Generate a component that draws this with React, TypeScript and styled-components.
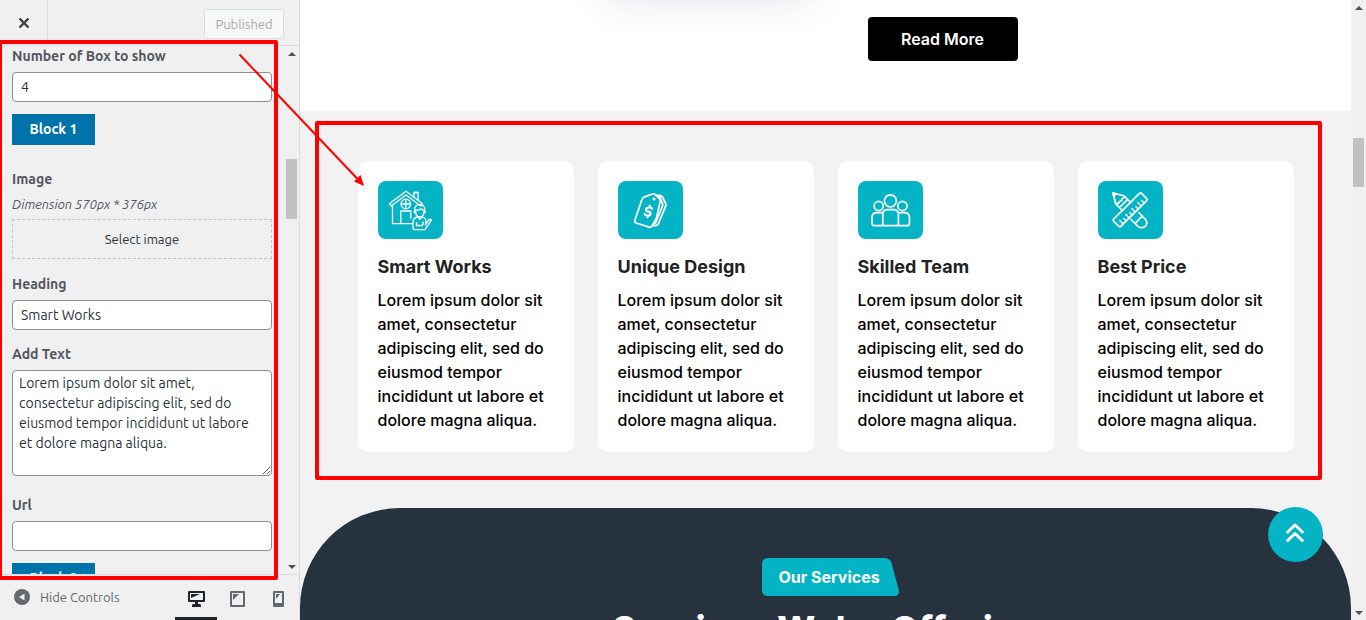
import React from "react";
import styled, { createGlobalStyle } from "styled-components";

const Global = createGlobalStyle`
  *, *::before, *::after { box-sizing: border-box; }
  body { margin: 0; overflow: hidden; background: #fff; }
  button, input, textarea { font: inherit; }
  h2, h3, p { margin: 0; }
`;

const TEAL = "#04b4c4";
const RED = "#ff0000";

const Page = styled.div`
  position: relative;
  display: flex;
  height: 100vh;
  overflow: hidden;
`;

const Sidebar = styled.aside`
  position: relative;
  flex: 0 0 300px;
  display: flex;
  flex-direction: column;
  background: #f0f0f0;
  border-right: 1px solid #dcdcde;
  font: 14px/20px Ubuntu, "Noto Sans", sans-serif;
  color: #50575e;
`;

const TopBar = styled.header`
  flex: 0 0 46px;
  display: flex;
  align-items: stretch;
  justify-content: space-between;
  border-bottom: 1px solid #dcdcde;
`;

const CloseButton = styled.button`
  width: 48px;
  padding: 0;
  border: 0;
  border-right: 1px solid #dcdcde;
  background: none;
  display: grid;
  place-items: center;
`;

const PublishButton = styled.button`
  align-self: center;
  width: 80px;
  height: 30px;
  margin: 2px 15px 0 0;
  padding: 0;
  border: 1px solid #dcdcde;
  border-radius: 3px;
  background: #f6f7f7;
  color: #a7aaad;
  font-size: 13px;
`;

const Scroller = styled.div`
  flex: 1;
  min-height: 0;
  display: flex;
`;

const Controls = styled.form`
  flex: 1;
  min-width: 0;
  overflow: hidden;
  padding: 0 12px;
`;

const Field = styled.div<{ $gap?: number }>`
  display: flex;
  flex-direction: column;
  align-items: stretch;
  margin-bottom: ${(p) => p.$gap ?? 12}px;
`;

const Label = styled.label<{ $tight?: boolean }>`
  margin-bottom: ${(p) => (p.$tight ? 5 : 6)}px;
  font-weight: 700;
  color: #50575e;
`;

const TextInput = styled.input`
  height: 30px;
  padding: 0 8px;
  border: 1px solid #8c8f94;
  border-radius: 4px;
  background: #fff;
  color: #2c3338;
`;

const TextArea = styled.textarea`
  display: block;
  height: 106px;
  padding: 2px 6px;
  border: 1px solid #8c8f94;
  border-radius: 4px;
  background: #fff;
  color: #2c3338;
  line-height: 20px;
  resize: vertical;
  overflow: hidden;
`;

const BlockButton = styled.button`
  display: block;
  width: 83px;
  height: 31px;
  margin-bottom: 24px;
  padding: 0 0 1px;
  border: 0;
  background: #0073aa;
  color: #fff;
  font-weight: 700;
`;

const Hint = styled.span`
  margin-bottom: 5px;
  font-size: 13px;
  font-style: italic;
`;

const SelectImage = styled.button`
  height: 40px;
  border: 1px dashed #c3c4c7;
  background: none;
  color: #2c3338;
  font-size: 13px;
`;

const Track = styled.div`
  flex: 0 0 15px;
  display: flex;
  flex-direction: column;
  align-items: center;
  padding: 6px 0 5px;
  background: #f0f0f0;
`;

const Spacer = styled.div<{ $grow: number }>`
  flex: ${(p) => p.$grow} 0 0;
`;

const Thumb = styled.div<{ $height: number }>`
  width: 11px;
  height: ${(p) => p.$height}px;
  background: #c1c1c1;
`;

const Footer = styled.footer`
  flex: 0 0 46px;
  display: flex;
  align-items: stretch;
  justify-content: space-between;
  border-top: 1px solid #dcdcde;
`;

const HideButton = styled.button`
  display: flex;
  align-items: center;
  gap: 10px;
  padding: 0 0 1px 14px;
  border: 0;
  background: none;
  color: #646970;
  font-size: 13px;
`;

const Devices = styled.div`
  display: flex;
`;

const DeviceButton = styled.button<{ $active?: boolean }>`
  width: ${(p) => (p.$active ? 42 : 41)}px;
  padding: 5px 0 0;
  border: 0;
  border-bottom: 3px solid ${(p) => (p.$active ? "#1d2327" : "transparent")};
  background: none;
  color: ${(p) => (p.$active ? "#1d2327" : "#646970")};
  display: grid;
  place-items: center;
`;

const Preview = styled.main`
  position: relative;
  flex: 1;
  min-width: 0;
  display: flex;
  flex-direction: column;
  overflow: hidden;
  background: #f2f2f2;
  font: 500 16px/24px Inter, sans-serif;
  color: #000;
`;

const Intro = styled.section`
  flex: 0 0 111px;
  display: grid;
  grid-template-columns: 1fr 1fr;
  align-items: start;
  overflow: hidden;
  background: #fff;
`;

const PhotoShadow = styled.div`
  justify-self: end;
  width: 210px;
  height: 60px;
  margin: -62px 12px 0 0;
  box-shadow: 0 0 40px rgba(38, 50, 72, 0.14);
  border-radius: 10px;
`;

const ReadMore = styled.a`
  justify-self: start;
  width: 150px;
  margin: 17px 0 0 42px;
  padding: 10px 0;
  border-radius: 4px;
  background: #000;
  color: #fff;
  font-weight: 600;
  text-align: center;
  text-decoration: none;
`;

const Features = styled.section`
  position: relative;
  display: grid;
  grid-template-columns: repeat(4, minmax(0, 216px));
  justify-content: center;
  gap: 24px;
  padding: 50px 40px 56px;
`;

const Card = styled.article`
  padding: 20px;
  border-radius: 10px;
  background: #fff;
`;

const IconTile = styled.div`
  width: 65px;
  height: 58px;
  border-radius: 8px;
  background: ${TEAL};

  svg { display: block; }
`;

const CardTitle = styled.h3`
  margin: 14px 0 8px;
  font-size: 18px;
  line-height: 27px;
  font-weight: 700;
  color: #222;
`;

const Services = styled.section`
  flex: 1 0 auto;
  display: flex;
  flex-direction: column;
  align-items: center;
  padding-top: 50px;
  border-radius: 100px 100px 0 0;
  background: #26323e;
  color: #fff;
`;

const Badge = styled.div`
  position: relative;
  width: 137px;
  height: 38px;
  margin-left: 9px;
  padding: 7px 17px;
  font-weight: 700;
  white-space: nowrap;

  svg { position: absolute; inset: 0; }
  span { position: relative; }
`;

const ServicesTitle = styled.h2`
  margin-top: 6px;
  font-size: 36px;
  line-height: 54px;
  font-weight: 800;
`;

const ToTop = styled.a`
  position: absolute;
  right: 28px;
  bottom: 58px;
  width: 55px;
  height: 55px;
  padding: 0 1px 4px 0;
  border-radius: 50%;
  background: ${TEAL};
  display: grid;
  place-items: center;
`;

const PanelOutline = styled.div`
  position: absolute;
  top: 40px;
  left: -2px;
  right: 21px;
  bottom: 40px;
  border: 4px solid ${RED};
  border-radius: 2px;
  pointer-events: none;
`;

const FeaturesOutline = styled.div`
  position: absolute;
  top: 10px;
  left: 15px;
  right: 29px;
  bottom: 28px;
  border: 4px solid ${RED};
  border-radius: 2px;
  pointer-events: none;
`;

const Arrow = styled.svg`
  position: absolute;
  top: 50px;
  left: 235px;
  pointer-events: none;
`;

const HouseIcon = () => (
  <svg width="65" height="58" viewBox="0 0 65 58" fill="none" stroke="#fff" strokeWidth="1.3" strokeLinejoin="round">
    <path d="M14.5 25V42.7H34.5M14.5 25.5 11.3 22.8 28 10.3 44.5 22.8 42.8 25 28 14 12.8 25.2M36 16V11.5H40V19.5" />
    <path d="M35.2 11.5h5.6" />
    <circle cx="27.8" cy="23" r="4.8" />
    <path d="M27.8 18.2v9.6M23 23h9.600M22.800 42.700V30h10v7.600" />
    <path d="M37 30c-1.200-4.500 1.500-6.300 4.700-6.300s6 1.800 4.800 6.300M37 29.300c3 0 4.700-.3 6.200-1.600.8 1 1.700 1.600 3.300 1.600M37.600 30c0 4 1.800 6 4.200 6s4.200-2 4.200-6M37 29.500c-1.500.7-1 2.700.8 2.700M46.500 29.500c1.500.7 1 2.700-.8 2.700" />
    <path d="M39.300 36l2.500 2.400L44.300 36M39.300 36c-3 .8-4.300 2-4.300 5v5.500c0 1.500 1 2.200 2 2.200h10l6.700-10-2.700-.4-4 6.200M44.300 36c2.200.7 3.500 2 3.500 4v2.500M38.500 41v3.500h6.500M45 40.500v3.500" />
  </svg>
);

const TagIcon = () => (
  <svg width="65" height="58" viewBox="0 0 65 58" fill="none" stroke="#fff" strokeWidth="1.8" strokeLinejoin="round" strokeLinecap="round">
    <path d="M26.500 15.800 34.500 13q1.500-.5 2.800.5l4.200 4.200q1 1 .7 2.700L38.500 37l-4.500 8q-1 1.600-3 1.200L18.200 42q-1.800-.6-1.400-2.500L24 18.200q.6-1.700 2.500-2.400Z" />
    <path d="M38 14.500h4q1.500 0 2.300 1.200l3.300 6.600q.6 1.200.2 2.400L40.500 42.500q-.8 2-2.800 2H34.500M41.500 15l3 7.500q.5 1.200 0 2.400L37.500 42" />
    <circle cx="36" cy="18" r="1.500" fill="#fff" stroke="none" />
    <path d="M34 27.500c-1.500-2-6-1-6 1.200 0 2.600 5 1.300 4.600 4-.4 2.200-4.800 2.500-6 .3M31.800 24.500 31.400 26M30 34.500 29.500 36.300" strokeWidth="2.200" />
  </svg>
);

const TeamIcon = () => (
  <svg width="65" height="58" viewBox="0 0 65 58" fill="none" stroke="#fff" strokeWidth="1.7" strokeLinejoin="round">
    <circle cx="32.400" cy="19.800" r="6" />
    <circle cx="20.700" cy="25" r="4.600" />
    <circle cx="44.400" cy="25" r="4.600" />
    <path d="M24.800 44.500V33.500q0-4.800 4.800-4.800h6q4.800 0 4.800 4.800V44.500" />
    <path d="M24.800 31.700H19q-5 0-5 5v5.500q0 2.500 2.500 2.500H49q2.500 0 2.500-2.500V36.700q0-5-5-5H40.400" />
  </svg>
);

const ToolsIcon = () => (
  <svg width="65" height="58" viewBox="0 0 65 58" fill="none" stroke="#fff" strokeWidth="1.700" strokeLinejoin="round" strokeLinecap="round">
    <path d="M41.500 12.400q1-1 2 0l5.200 5.200q1 1 0 2L23 45.200q-1.200 1.200-2.400 0l-5-5q-1-1 0-2Z" />
    <path d="M46.300 22l-2.300-2.300M43.200 25l-3.500-3.500M40.200 28l-2.300-2.300M37.200 31l-3.500-3.500M34.200 34l-2.300-2.300M31.200 37l-3.500-3.500M28.200 40l-2.300-2.300M25.200 43l-3.500-3.500" strokeWidth="1.500" />
    <path d="M24.500 29.500 17.800 23 15 12 26 14.800 32.800 21.500M17.800 23C20 23 21 22 21.300 20.500M21.300 20.500q3 0 2.700-3 2 0 2-2.700M21.500 26.500l8-8" />
    <path d="M15 12l3 .8-2.200 2.200Z" fill="#fff" />
    <path d="M33 38.500 40 45.300q2 1.800 4.500 1.300 4-.8 4.300-4.600 0-2-1.300-3.500L40.800 31.500M37 42.300l7.500-7.500" />
  </svg>
);

const cards = [
  { title: "Smart Works", Icon: HouseIcon },
  { title: "Unique Design", Icon: TagIcon },
  { title: "Skilled Team", Icon: TeamIcon },
  { title: "Best Price", Icon: ToolsIcon },
];

const UpArrow = () => (
  <svg width="8" height="4" viewBox="0 0 8 4"><path d="M4 0 8 4H0Z" fill="#505050" /></svg>
);
const DownArrow = () => (
  <svg width="8" height="4" viewBox="0 0 8 4"><path d="M0 0H8L4 4Z" fill="#505050" /></svg>
);

const ScrollTrack = ({ before, size, after }: { before: number; size: number; after: number }) => (
  <Track aria-hidden="true">
    <UpArrow />
    <Spacer $grow={before} />
    <Thumb $height={size} />
    <Spacer $grow={after} />
    <DownArrow />
  </Track>
);

export default function App() {
  return (
    <>
      <Global />
      <Page>
        <Sidebar>
          <TopBar>
            <CloseButton aria-label="Close">
              <svg width="12" height="12" viewBox="0 0 12 12" stroke="#3c434a" strokeWidth="2.400">
                <path d="M1.500 1.500l9 9M10.500 1.500l-9 9" />
              </svg>
            </CloseButton>
            <PublishButton>Published</PublishButton>
          </TopBar>
          <Scroller>
            <Controls>
              <Field>
                <Label htmlFor="count">Number of Box to show</Label>
                <TextInput id="count" defaultValue="4" />
              </Field>
              <BlockButton type="button">Block 1</BlockButton>
              <Field $gap={15}>
                <Label htmlFor="image" $tight>Image</Label>
                <Hint>Dimension 570px * 376px</Hint>
                <SelectImage id="image" type="button">Select image</SelectImage>
              </Field>
              <Field $gap={14}>
                <Label htmlFor="heading">Heading</Label>
                <TextInput id="heading" defaultValue="Smart Works" />
              </Field>
              <Field $gap={19}>
                <Label htmlFor="text">Add Text</Label>
                <TextArea
                  id="text"
                  defaultValue="Lorem ipsum dolor sit amet, consectetur adipiscing elit, sed do eiusmod tempor incididunt ut labore et dolore magna aliqua."
                />
              </Field>
              <Field>
                <Label htmlFor="url">Url</Label>
                <TextInput id="url" />
              </Field>
              <BlockButton type="button">Block 2</BlockButton>
            </Controls>
            <ScrollTrack before={103} size={60} after={344} />
          </Scroller>
          <Footer>
            <HideButton>
              <svg width="16" height="16" viewBox="0 0 16 16">
                <circle cx="8" cy="8" r="8" fill="#646970" />
                <path d="M10.500 4.500v7L5 8Z" fill="#f0f0f0" />
              </svg>
              Hide Controls
            </HideButton>
            <Devices>
              <DeviceButton $active aria-label="Desktop">
                <svg width="17" height="16" viewBox="0 0 17 16" fill="currentColor">
                  <path fillRule="evenodd" d="M1 0h15q1 0 1 1v9q0 1-1 1H10v2h2l1 1v2H4v-2l1-1h2v-2H1q-1 0-1-1V1Q0 0 1 0ZM2 2v7h13V2ZM3 3h9L3 7Z" />
                </svg>
              </DeviceButton>
              <DeviceButton aria-label="Tablet">
                <svg width="15" height="16" viewBox="0 0 15 16" fill="currentColor">
                  <path fillRule="evenodd" d="M1 0h13q1 0 1 1v14q0 1-1 1H1q-1 0-1-1V1Q0 0 1 0ZM2 2v12h11V2ZM3 3h6L3 9Z" />
                </svg>
              </DeviceButton>
              <DeviceButton aria-label="Mobile">
                <svg width="11" height="16" viewBox="0 0 11 16" fill="currentColor">
                  <path fillRule="evenodd" d="M1 0h9q1 0 1 1v14q0 1-1 1H1q-1 0-1-1V1Q0 0 1 0ZM2 2v10h7V2ZM3 3h4L3 8Z" />
                </svg>
              </DeviceButton>
            </Devices>
          </Footer>
          <PanelOutline />
        </Sidebar>

        <Preview>
          <Intro>
            <PhotoShadow />
            <ReadMore href="#">Read More</ReadMore>
          </Intro>
          <Features>
            {cards.map(({ title, Icon }) => (
              <Card key={title}>
                <IconTile><Icon /></IconTile>
                <CardTitle>{title}</CardTitle>
                <p>Lorem ipsum dolor sit amet, consectetur adipiscing elit, sed do eiusmod tempor incididunt ut labore et dolore magna aliqua.</p>
              </Card>
            ))}
            <FeaturesOutline />
          </Features>
          <Services>
            <Badge>
              <svg width="137" height="38" viewBox="0 0 137 38">
                <path d="M6 0H122q6 0 7.500 5L137 33q0 5-5 5H6q-6 0-6-6V6Q0 0 6 0Z" fill={TEAL} />
              </svg>
              <span>Our Services</span>
            </Badge>
            <ServicesTitle>Services We're Offering</ServicesTitle>
          </Services>
          <ToTop href="#" aria-label="Back to top">
            <svg width="18" height="20" viewBox="0 0 18 20" fill="none" stroke="#fff" strokeWidth="3" strokeLinecap="round" strokeLinejoin="round">
              <path d="M1.700 9 9 2l7.300 7M1.700 17.500l7.300-7 7.300 7" />
            </svg>
          </ToTop>
        </Preview>
        <ScrollTrack before={127} size={49} after={420} />
        <Arrow width="135" height="140" viewBox="0 0 135 140">
          <path d="M4.500 4.500 124 130.500" stroke={RED} strokeWidth="2" />
          <path d="M129 136 119 131.500 125.500 125Z" fill={RED} />
        </Arrow>
      </Page>
    </>
  );
}
